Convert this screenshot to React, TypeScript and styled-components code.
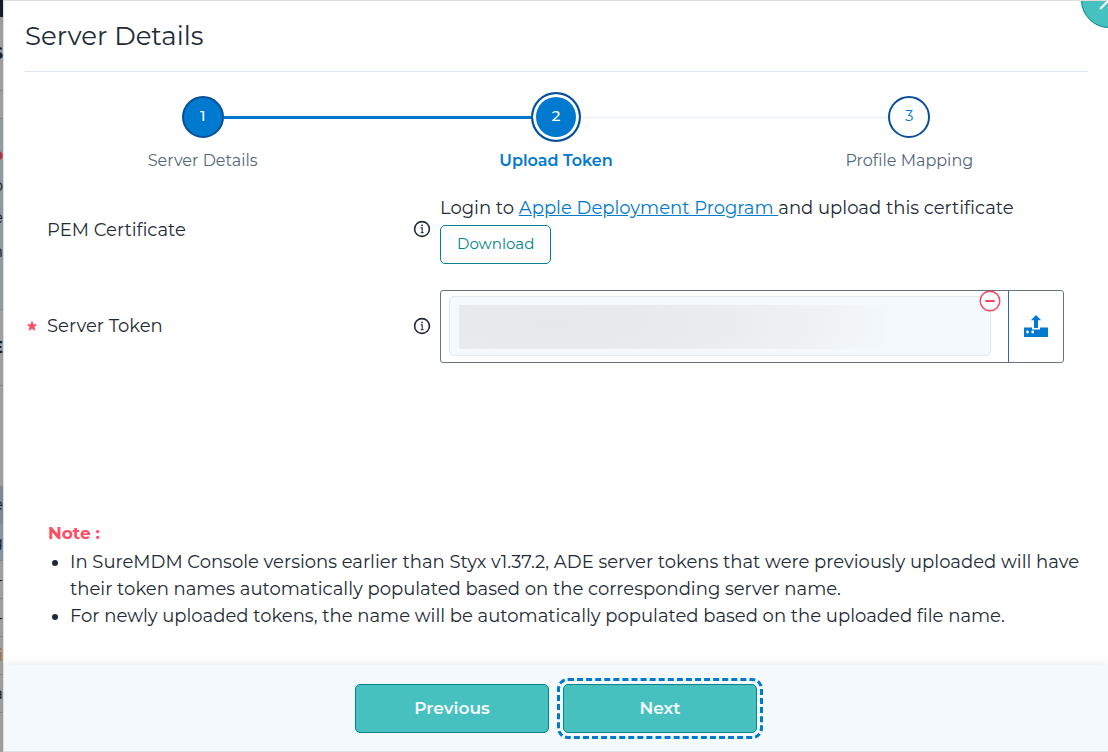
import React from "react";
import styled, { createGlobalStyle } from "styled-components";

const GlobalStyle = createGlobalStyle`
  *, *::before, *::after { box-sizing: border-box; }
  body {
    margin: 0;
    font-family: Montserrat, Inter, "Open Sans", sans-serif;
    font-size: 18px;
    line-height: 27px;
    color: #212b36;
    background: #fff;
  }
  button { font-family: inherit; cursor: pointer; }
`;

const Page = styled.div`
  display: flex;
  min-height: 100vh;
`;

const Backdrop = styled.div`
  flex: 0 0 3px;
  display: flex;
  flex-direction: column;
  overflow: hidden;
  background: #9e9e9e;
`;

const Sliver = styled.div<{ $h: number; $bg?: string; $ink?: string; $line?: boolean; $bold?: boolean }>`
  flex: 0 0 ${(p) => p.$h}px;
  display: flex;
  align-items: center;
  justify-content: flex-end;
  overflow: hidden;
  font-size: 16px;
  font-weight: ${(p) => (p.$bold ? 700 : 400)};
  color: ${(p) => p.$ink || "#161d25"};
  background: ${(p) => p.$bg || "#9e9e9e"};
  border-bottom: ${(p) => (p.$line ? "1px solid #7f868b" : "0")};
`;

const Dialog = styled.section`
  position: relative;
  flex: 1;
  min-width: 0;
  display: flex;
  flex-direction: column;
  overflow: hidden;
  background: #fff;
  border: 1px solid #dedede;
  border-right: 0;
`;

const Title = styled.h1`
  margin: 0 20px 0 21px;
  padding: 19px 0;
  font-size: 26px;
  line-height: 32px;
  font-weight: 400;
  border-bottom: 1px solid #dfe6ee;
`;

const CloseButton = styled.button`
  position: absolute;
  top: -29px;
  right: -29px;
  width: 56px;
  height: 56px;
  padding: 0;
  display: grid;
  place-items: center;
  color: #fff;
  background: #47c1bf;
  border: 1px solid #00848e;
  border-radius: 50%;
`;

const Stepper = styled.ol`
  display: flex;
  margin: 20px 22px 0;
  padding: 0;
  list-style: none;
`;

type StepState = "done" | "active" | "todo";

const Step = styled.li`
  flex: 1;
  display: grid;
  grid-template-columns: 1fr auto 1fr;
  align-items: center;
  row-gap: 8px;
  font-size: 15px;
  line-height: 22px;
`;

const Track = styled.span<{ $color: string }>`
  height: 3px;
  background: ${(p) => p.$color};
`;

const StepCircle = styled.span<{ $state: StepState }>`
  display: grid;
  place-items: center;
  width: ${(p) => (p.$state === "active" ? 50 : 42)}px;
  height: ${(p) => (p.$state === "active" ? 50 : 42)}px;
  margin: ${(p) => (p.$state === "active" ? 0 : "4px 0")};
  padding-bottom: 2px;
  font-weight: ${(p) => (p.$state === "todo" ? 400 : 500)};
  color: ${(p) => (p.$state === "todo" ? "#007ace" : "#fff")};
  background: ${(p) => (p.$state === "todo" ? "#fff" : "#007ace")};
  border: 2px solid #084e9a;
  border-radius: 50%;
  box-shadow: ${(p) => (p.$state === "active" ? "inset 0 0 0 3px #fff" : "none")};
`;

const StepLabel = styled.span<{ $state: StepState }>`
  grid-column: 1 / -1;
  text-align: center;
  font-size: 16px;
  font-weight: ${(p) => (p.$state === "active" ? 600 : 400)};
  color: ${(p) => (p.$state === "active" ? "#007ace" : "#54687a")};
`;

const Form = styled.div`
  display: grid;
  gap: 26px;
  padding: 24px 44px 0 22px;
`;

const Row = styled.div`
  display: grid;
  grid-template-columns: 414fr 624fr;
  align-items: center;
`;

const LabelCell = styled.div`
  display: flex;
  align-items: center;
  padding-right: 9px;
`;

const Marker = styled.span`
  width: 21px;
  display: flex;
  padding-bottom: 2px;
  color: #ff4d63;
`;

const FieldName = styled.span`
  flex: 1;
`;

const InfoButton = styled.button`
  display: flex;
  padding: 0 0 2px;
  color: #212b36;
  background: none;
  border: 0;
`;

const Hint = styled.p`
  margin: 0;
  line-height: 24px;
`;

const Link = styled.a`
  color: #007ace;
  text-decoration: underline;
  white-space: pre-wrap;
`;

const DownloadButton = styled.button`
  display: block;
  height: 39px;
  padding: 0 16px 2px;
  margin-top: 5px;
  font-size: 15px;
  color: #00848e;
  background: #fff;
  border: 1px solid #00848e;
  border-radius: 5px;
`;

const TokenField = styled.div`
  display: flex;
  height: 73px;
  border: 1px solid #637381;
  border-radius: 3px;
`;

const TokenArea = styled.div`
  flex: 1;
  padding: 5px 17px 6px 8px;
`;

const TokenChip = styled.div`
  position: relative;
  height: 60px;
  padding: 8px 9px;
  background: #f4f9fd;
  border: 1px solid #e0e9f1;
  border-radius: 5px;
`;

const TokenMask = styled.div`
  width: 82%;
  height: 44px;
  background: radial-gradient(ellipse 82% 180% at 22% 42%, #e4e8eb 0%, #e8ecef 45%, #eff3f6 80%, #f4f9fd 100%);
`;

const RemoveButton = styled.button`
  position: absolute;
  top: -7px;
  right: -11px;
  display: flex;
  padding: 0;
  background: none;
  border: 0;
`;

const UploadButton = styled.button`
  flex: 0 0 55px;
  display: grid;
  place-items: center;
  padding: 0 0 2px;
  color: #007ace;
  background: #fff;
  border: 0;
  border-left: 1px solid #2b6cb0;
  border-radius: 0 3px 3px 0;
`;

const Note = styled.section`
  margin: auto 20px 35px 44px;
  padding-top: 40px;
`;

const NoteTitle = styled.h2`
  margin: 0 0 2px;
  font-size: 17px;
  line-height: 27px;
  font-weight: 700;
  color: #ff4d63;
`;

const NoteList = styled.ul`
  margin: 0;
  padding-left: 22px;
`;

const Footer = styled.footer`
  display: flex;
  justify-content: center;
  gap: 14px;
  padding: 19px 16px 18px;
  background: #f4f9fd;
  box-shadow: 0 0 10px rgba(0, 0, 0, 0.1);
`;

const ActionButton = styled.button<{ $focused?: boolean }>`
  width: 194px;
  height: 49px;
  padding: 0 0 2px;
  font-size: 17px;
  font-weight: 600;
  color: #f4fbfd;
  background: #47c1bf;
  border: 1px solid #00848e;
  border-radius: 5px;
  outline: ${(p) => (p.$focused ? "3px dashed #007ace" : "none")};
  outline-offset: 3px;
`;

const InfoIcon = () => (
  <svg width="18" height="18" viewBox="0 0 18 18" fill="none" stroke="currentColor" strokeWidth="1.6" aria-hidden="true">
    <circle cx="9" cy="9" r="7.4" />
    <path d="M7.7 7.9H9.2V12.8M7.7 12.7H10.7" strokeWidth="1.1" />
    <circle cx="9" cy="5.4" r="0.9" fill="currentColor" stroke="none" />
  </svg>
);

const steps: { label: string; state: StepState; before: string; after: string }[] = [
  { label: "Server Details", state: "done", before: "transparent", after: "#007ace" },
  { label: "Upload Token", state: "active", before: "#007ace", after: "#f4f8fb" },
  { label: "Profile Mapping", state: "todo", before: "#f4f8fb", after: "transparent" },
];

export default function App() {
  return (
    <>
      <GlobalStyle />
      <Page>
        <Backdrop aria-hidden="true">
          <Sliver $h={17} $bg="#161f29" />
          <Sliver $h={74} $bold $line>S</Sliver>
          <Sliver $h={28} $line />
          <Sliver $h={20} $bg="#939a9e" />
          <Sliver $h={30} $bold $ink="#b0303f" $bg="#939a9e">p</Sliver>
          <Sliver $h={32} $bg="#939a9e">o</Sliver>
          <Sliver $h={32} $bg="#939a9e">e</Sliver>
          <Sliver $h={36} $bg="#939a9e">n</Sliver>
          <Sliver $h={41} $bg="#939a9e" $line />
          <Sliver $h={76} $bold $line>E</Sliver>
          <Sliver $h={100} />
          <Sliver $h={38} $bg="#7e8a93" $line>e</Sliver>
          <Sliver $h={37} $bg="#8496a6" $line>g</Sliver>
          <Sliver $h={38} $line>-</Sliver>
          <Sliver $h={38} $line>-</Sliver>
          <Sliver $h={38} $ink="#a06a20" $line>i</Sliver>
          <Sliver $h={38} $line>a</Sliver>
        </Backdrop>
        <Dialog role="dialog" aria-labelledby="dialog-title">
          <Title id="dialog-title">Server Details</Title>
          <CloseButton aria-label="Close">
            <svg width="20" height="20" viewBox="0 0 20 20" stroke="currentColor" strokeWidth="2" aria-hidden="true">
              <path d="M1 1L19 19M19 1L1 19" />
            </svg>
          </CloseButton>
          <Stepper>
            {steps.map((s, i) => (
              <Step key={s.label} aria-current={s.state === "active" ? "step" : undefined}>
                <Track $color={s.before} />
                <StepCircle $state={s.state}>{i + 1}</StepCircle>
                <Track $color={s.after} />
                <StepLabel $state={s.state}>{s.label}</StepLabel>
              </Step>
            ))}
          </Stepper>
          <Form>
            <Row>
              <LabelCell>
                <Marker />
                <FieldName>PEM Certificate</FieldName>
                <InfoButton aria-label="About PEM Certificate"><InfoIcon /></InfoButton>
              </LabelCell>
              <div>
                <Hint>
                  Login to <Link href="#deployment">{"Apple Deployment Program "}</Link>and upload this certificate
                </Hint>
                <DownloadButton>Download</DownloadButton>
              </div>
            </Row>
            <Row>
              <LabelCell>
                <Marker>
                  <svg width="12" height="12" viewBox="0 0 12 12" fill="currentColor" aria-hidden="true">
                    <path d="M6 0.6L7.5 4.2L11.4 4.5L8.4 7L9.4 10.9L6 8.8L2.6 10.9L3.6 7L0.6 4.5L4.5 4.2Z" />
                  </svg>
                </Marker>
                <FieldName id="token-label">Server Token</FieldName>
                <InfoButton aria-label="About Server Token"><InfoIcon /></InfoButton>
              </LabelCell>
              <TokenField role="group" aria-labelledby="token-label">
                <TokenArea>
                  <TokenChip>
                    <TokenMask />
                    <RemoveButton aria-label="Remove token">
                      <svg width="22" height="22" viewBox="0 0 22 22" fill="#fff" stroke="#f5455c" aria-hidden="true">
                        <circle cx="11" cy="11" r="9.8" strokeWidth="1.4" />
                        <path d="M6.3 11H15.7" strokeWidth="2" />
                      </svg>
                    </RemoveButton>
                  </TokenChip>
                </TokenArea>
                <UploadButton aria-label="Upload token">
                  <svg width="26" height="24" viewBox="0 0 26 24" fill="currentColor" aria-hidden="true">
                    <path d="M1 13.5H9V15.5H17V13.5H25V23H1Z" />
                    <path d="M13 1L18.2 6.3H15V14H11V6.3H7.8Z" />
                    <circle cx="4.5" cy="18" r="1.4" fill="#fff" />
                    <circle cx="9.7" cy="18" r="1.4" fill="#fff" />
                  </svg>
                </UploadButton>
              </TokenField>
            </Row>
          </Form>
          <Note>
            <NoteTitle>Note :</NoteTitle>
            <NoteList>
              <li>
                In SureMDM Console versions earlier than Styx v1.37.2, ADE server tokens that were previously uploaded
                will have their token names automatically populated based on the corresponding server name.
              </li>
              <li>
                For newly uploaded tokens, the name will be automatically populated based on the uploaded file name.
              </li>
            </NoteList>
          </Note>
          <Footer>
            <ActionButton>Previous</ActionButton>
            <ActionButton $focused>Next</ActionButton>
          </Footer>
        </Dialog>
      </Page>
    </>
  );
}
